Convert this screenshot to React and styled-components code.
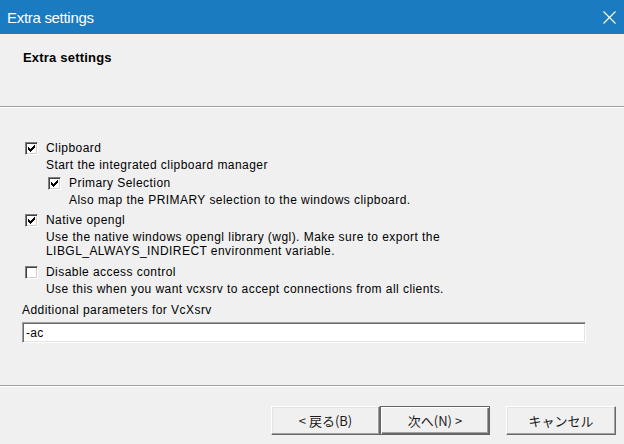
import React from "react";
import styled, { createGlobalStyle } from "styled-components";

const Global = createGlobalStyle`
  html, body {
    margin: 0;
    padding: 0;
    background: #f0f0f0;
  }
  body {
    font-family: "Liberation Sans", Arial, sans-serif;
    font-size: 12px;
    color: #000;
  }
`;

const Window = styled.div`
  width: 624px;
  height: 444px;
  background: #f0f0f0;
  display: flex;
  flex-direction: column;
  overflow: hidden;
`;

const TitleBar = styled.div`
  height: 34px;
  background: #1a7bc1;
  color: #fff;
  display: flex;
  align-items: center;
  justify-content: space-between;
  padding: 0 8px 0 7px;
  font-family: "Liberation Sans", Arial, sans-serif;
  font-size: 15px;
  letter-spacing: -0.3px;
`;

const CloseBtn = styled.div`
  width: 13px;
  height: 13px;
  display: flex;
`;

const Header = styled.div`
  height: 72px;
  padding: 16px 0 0 23px;
  box-sizing: border-box;
  font-weight: bold;
  font-size: 13px;
  letter-spacing: 0.2px;
`;

const Divider = styled.div`
  border-top: 1px solid #a0a0a0;
  border-bottom: 1px solid #ffffff;
`;

const Body = styled.div`
  flex: 1;
  padding: 33px 38px 0 22px;
  display: flex;
  flex-direction: column;
  letter-spacing: 0.45px;
`;

const Option = styled.div`
  margin-left: ${({ indent }) => (indent ? "26px" : "3px")};
  margin-top: ${({ gap }) => gap || 0}px;
`;

const CheckRow = styled.label`
  display: flex;
  align-items: center;
  gap: 8px;
  height: 14px;
  line-height: 14px;
`;

const Box = styled.span`
  width: 11px;
  height: 11px;
  background: #fff;
  border: 1px solid;
  border-color: #808080 #ffffff #ffffff #808080;
  box-shadow: inset 1px 1px 0 #404040, inset -1px -1px 0 #d4d0c8;
  display: flex;
  align-items: center;
  justify-content: center;
  flex-shrink: 0;
`;

const Desc = styled.div`
  margin-left: 21px;
  line-height: 14px;
  margin-top: 3px;
`;

const FieldLabel = styled.div`
  margin-top: 7px;
  line-height: 14px;
`;

const Field = styled.div`
  margin-top: 5px;
  height: 21px;
  width: 564px;
  box-sizing: border-box;
  background: #fff;
  border: 1px solid;
  border-color: #a0a0a0 #ffffff #ffffff #a0a0a0;
  box-shadow: inset 1px 1px 0 #696969, inset -1px -1px 0 #e3e3e3;
  padding: 3px 3px;
  line-height: 14px;
  letter-spacing: 0.3px;
`;

const Footer = styled.div`
  height: 57px;
  display: flex;
  justify-content: flex-end;
  align-items: flex-start;
  padding: 19px 8px 0 0;
  box-sizing: border-box;
`;

const Button = styled.div`
  width: ${({ w }) => w || 109}px;
  height: 29px;
  box-sizing: border-box;
  background: #f0f0f0;
  display: flex;
  align-items: center;
  justify-content: center;
  font-family: "Noto Sans CJK JP", sans-serif;
  font-size: 13px;
  color: #1a1a1a;
  margin-left: ${({ ml }) => ml || 0}px;
  border: 1px solid;
  border-color: ${({ primary }) =>
    primary ? "#646464" : "#ffffff #696969 #696969 #ffffff"};
  box-shadow: ${({ primary }) =>
    primary
      ? "inset 1px 1px 0 #fff, inset -1px -1px 0 #696969, inset -2px -2px 0 #a0a0a0"
      : "inset -1px -1px 0 #a0a0a0, inset 1px 1px 0 #e3e3e3"};
`;

const Check = () => (
  <svg width="7" height="7" viewBox="0 0 7 7" shapeRendering="crispEdges">
    <path
      d="M0 2 H1 V3 H2 V4 H3 V3 H4 V2 H5 V1 H6 V0 H7 V3 H6 V4 H5 V5 H4 V6 H3 V7 H2 V6 H1 V5 H0 Z"
      fill="#000"
    />
  </svg>
);

const CheckOption = ({ checked, label }) => (
  <CheckRow>
    <Box>{checked && <Check />}</Box>
    <span>{label}</span>
  </CheckRow>
);

export default function App() {
  return (
    <Window>
      <Global />
      <TitleBar>
        <span>Extra settings</span>
        <CloseBtn>
          <svg width="13" height="13" viewBox="0 0 13 13">
            <path d="M0.5 0.5 L12.5 12.5 M12.5 0.5 L0.5 12.5" stroke="#fff" strokeWidth="1.1" />
          </svg>
        </CloseBtn>
      </TitleBar>
      <Header>Extra settings</Header>
      <Divider />
      <Body>
        <Option>
          <CheckOption checked label="Clipboard" />
          <Desc>Start the integrated clipboard manager</Desc>
        </Option>
        <Option indent gap={4}>
          <CheckOption checked label="Primary Selection" />
          <Desc>Also map the PRIMARY selection to the windows clipboard.</Desc>
        </Option>
        <Option gap={6}>
          <CheckOption checked label="Native opengl" />
          <Desc>
            Use the native windows opengl library (wgl). Make sure to export the
            <br />
            LIBGL_ALWAYS_INDIRECT environment variable.
          </Desc>
        </Option>
        <Option gap={7}>
          <CheckOption label="Disable access control" />
          <Desc>Use this when you want vcxsrv to accept connections from all clients.</Desc>
        </Option>
        <FieldLabel>Additional parameters for VcXsrv</FieldLabel>
        <Field>-ac</Field>
      </Body>
      <Divider />
      <Footer>
        <Button>&lt; 戻る(B)</Button>
        <Button primary w={110}>次へ(N) &gt;</Button>
        <Button ml={16} w={110}>キャンセル</Button>
      </Footer>
    </Window>
  );
}
